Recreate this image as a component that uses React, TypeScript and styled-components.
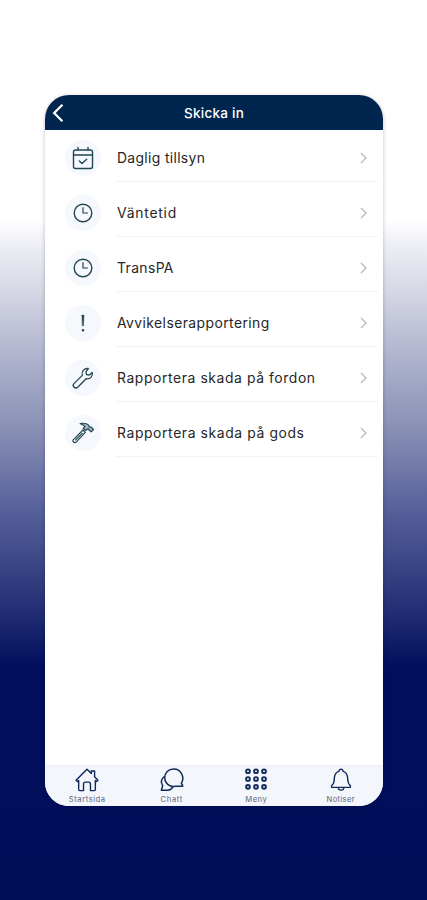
import React from 'react';
import styled, { createGlobalStyle } from 'styled-components';

const Global = createGlobalStyle`
  * { box-sizing: border-box; }
  body { margin: 0; font-family: Inter, "Open Sans", sans-serif; }
`;

const Page = styled.main`
  height: 900px;
  padding: 95px 44px 0 45px;
  background: linear-gradient(
    to bottom,
    #fff 0, #fff 220px, #eff0f5 243px, #d3d5e3 295px, #b0b4ce 355px,
    #8b92b5 425px, #777fac 458px, #56609a 510px, #3d4887 560px,
    #202c72 615px, #000e5c 668px, #000e5a 100%
  );
`;

const Phone = styled.section`
  height: 711px;
  display: flex;
  flex-direction: column;
  overflow: hidden;
  border-radius: 24px;
  background: #fff;
  box-shadow: 0 1px 4px rgba(0, 0, 40, 0.24);
`;

const Header = styled.header`
  height: 35px;
  flex: none;
  display: grid;
  grid-template-columns: 28px 1fr 28px;
  align-items: center;
  background: #00264f;
  color: #fff;
`;

const Back = styled.button`
  display: flex;
  padding: 0 0 0 7px;
  border: 0;
  background: none;
  color: inherit;
`;

const Title = styled.h1`
  margin: 0;
  text-align: center;
  font-size: 13.5px;
  font-weight: 500;
  line-height: 20px;
  letter-spacing: 0.25px;
`;

const List = styled.ul`
  flex: 1;
  margin: 0;
  padding: 0;
  list-style: none;
`;

const Row = styled.li`
  display: flex;
  align-items: flex-end;
  height: 55.2px;
  padding-left: 20px;
  &:first-child { height: 51.5px; }
`;

const Disc = styled.span`
  display: grid;
  place-items: center;
  width: 36px;
  height: 36px;
  margin: 0 15px 6px 0;
  border-radius: 50%;
  background: #f5f8fc;
  color: #244653;
`;

const Content = styled.div`
  flex: 1;
  display: flex;
  align-items: center;
  justify-content: space-between;
  height: 47px;
  margin-right: 5px;
  padding-right: 10px;
  border-bottom: 1px solid #f2f2f5;
  color: #b8b8b8;
`;

const Label = styled.span<{ $spacing: number }>`
  padding-left: 1px;
  color: #262626;
  font-size: 13.9px;
  line-height: 20px;
  white-space: nowrap;
  letter-spacing: ${(p) => p.$spacing}px;
`;

const Nav = styled.nav`
  height: 41px;
  flex: none;
  display: grid;
  grid-template-columns: repeat(4, 1fr);
  border-top: 1px solid #ebeef3;
  background: #f3f6fa;
`;

const Tab = styled.a`
  display: flex;
  flex-direction: column;
  align-items: center;
  padding-top: 1px;
  color: #12295b;
`;

const TabLabel = styled.span<{ $spacing: number }>`
  margin-top: 2px;
  color: #5b6480;
  font-size: 7.6px;
  line-height: 10px;
  letter-spacing: ${(p) => p.$spacing}px;
`;

const Svg = ({ size, stroke = 1.4, children }: { size: number; stroke?: number; children: React.ReactNode }) => (
  <svg width={size} height={size} viewBox="0 0 24 24" fill="none" stroke="currentColor"
    strokeWidth={stroke} strokeLinecap="round" strokeLinejoin="round" aria-hidden="true">
    {children}
  </svg>
);

const Calendar = () => (
  <Svg size={24}>
    <rect x="2.5" y="4" width="19" height="18.5" rx="2" />
    <path d="M2.5 9h19M7 4V1.5M17 4V1.5M8.3 15l2.7 2.5 4.7-4.3" />
  </Svg>
);
const Clock = () => (
  <Svg size={24}>
    <circle cx="12" cy="12" r="8.8" />
    <path d="M12 6.5V12h4.5" strokeWidth="1.2" />
  </Svg>
);
const Exclamation = () => (
  <Svg size={24}>
    <path d="M10.9 4h2.2l-.5 11h-1.2z" fill="currentColor" strokeWidth=".3" />
    <circle cx="12" cy="19.2" r="1.2" fill="currentColor" stroke="none" />
  </Svg>
);
const Wrench = () => (
  <Svg size={24} stroke={1.3}>
    <path d="M3 17.6l8.3-8.2c-1-4.2 2-7.4 6-6.9l-2.4 3.3.6 2.7 2.8.6 3-2.6c.8 4-2.2 7-6.2 6.2L7 21c-1.4 1.3-3.2.9-4.1 0-1-1-1-2.3.1-3.4z" />
  </Svg>
);
const Hammer = () => (
  <Svg size={24} stroke={1.2}>
    <path d="M2.2 18.8L12 9l2.3 2.3-9.4 10c-1.6 1.2-4-1-2.7-2.5zM4.7 18.9l6.5-6.5" />
    <path d="M9.2 2.7c3.4-.9 6.3-.5 8.5 1.4l.5 2 1.8-.1 2.4 2.5-2.2 2.3-2.4-2-.9-1.1-2.4 1.8-2.3-2.2L14 5.5C13 4 11.2 3.3 9.2 2.7z" fill="#a9b9c1" />
  </Svg>
);

const House = () => (
  <Svg size={26} stroke={1.3}>
    <path d="M1.9 12.2L12 2l4 4V3.7h3V9l3.1 3.2-1.4 1.3-1-1V20.8c0 .7-.4 1-1 1h-3.5v-6c0-1.1-.7-1.8-1.6-1.8h-3.2c-1 0-1.6.7-1.6 1.8v6H5.3c-.6 0-1-.4-1-1v-8.3l-1 1z" />
  </Svg>
);
const Chat = () => (
  <Svg size={26} stroke={1.4}>
    <path d="M20.6 15.3c3.6-6.2-.5-13.5-7-13.5-4.9 0-8.3 3.6-8.3 8 0 5.5 4.8 9 10 8h6.5v-1z" />
    <path d="M4.6 9C1.9 11 1.4 14.5 3.4 17.2L2.2 21.4h5.5c2 .1 3.8-.7 4.9-2.8" />
  </Svg>
);
const Dots = () => (
  <Svg size={26} stroke={1.75}>
    {[3.9, 11.1, 18.3].map((y) => [4.6, 12, 19.4].map((x) => <circle key={`${x}-${y}`} cx={x} cy={y} r="1.75" />))}
  </Svg>
);
const Bell = () => (
  <Svg size={26} stroke={1.25}>
    <path d="M10.3 3.8C10.1 1.5 14 1.5 13.8 3.8c3.6 1.1 4.4 4 4.4 7.3 0 3 .7 4.6 2.5 6.2v1.5H3.3v-1.5c1.9-1.6 2.5-3.2 2.5-6.2 0-3.3.9-6.2 4.5-7.3zM9.4 18.9c.3 3.2 5 3.2 5.3 0" />
  </Svg>
);

const rows = [
  { label: 'Daglig tillsyn', Icon: Calendar, spacing: 0.34 },
  { label: 'Väntetid', Icon: Clock, spacing: 0.74 },
  { label: 'TransPA', Icon: Clock, spacing: 0.38 },
  { label: 'Avvikelserapportering', Icon: Exclamation, spacing: 0.43 },
  { label: 'Rapportera skada på fordon', Icon: Wrench, spacing: 0.59 },
  { label: 'Rapportera skada på gods', Icon: Hammer, spacing: 0.61 },
];

const tabs = [
  { label: 'Startsida', Icon: House, spacing: 0.55 },
  { label: 'Chatt', Icon: Chat, spacing: 0.65 },
  { label: 'Meny', Icon: Dots, spacing: 0.5 },
  { label: 'Notiser', Icon: Bell, spacing: 0.35 },
];

export default function App() {
  return (
    <>
      <Global />
      <Page>
        <Phone>
          <Header>
            <Back aria-label="Tillbaka">
              <svg width="12" height="20" viewBox="0 0 12 20" fill="none" stroke="currentColor" strokeWidth="2.3">
                <path d="M10.4 1.8L2.2 10l8.2 8.2" />
              </svg>
            </Back>
            <Title>Skicka in</Title>
          </Header>
          <List>
            {rows.map(({ label, Icon, spacing }) => (
              <Row key={label}>
                <Disc><Icon /></Disc>
                <Content>
                  <Label $spacing={spacing}>{label}</Label>
                  <svg width="9" height="12" viewBox="0 0 9 12" fill="none" stroke="currentColor" strokeWidth="1.3">
                    <path d="M2 1l5 5-5 5" />
                  </svg>
                </Content>
              </Row>
            ))}
          </List>
          <Nav>
            {tabs.map(({ label, Icon, spacing }) => (
              <Tab key={label}>
                <Icon />
                <TabLabel $spacing={spacing}>{label}</TabLabel>
              </Tab>
            ))}
          </Nav>
        </Phone>
      </Page>
    </>
  );
}
